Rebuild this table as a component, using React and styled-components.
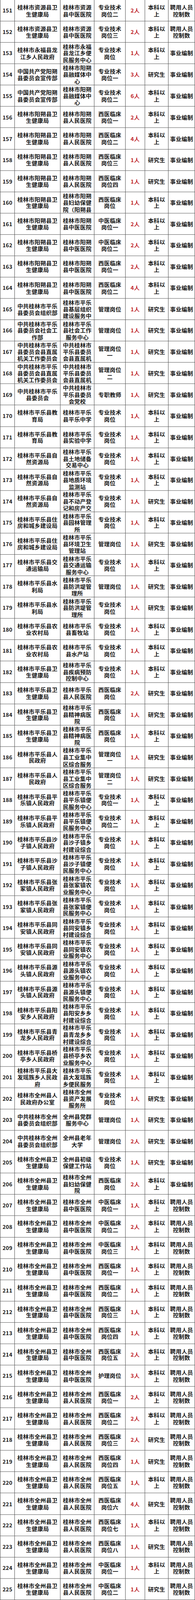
import React from 'react';
import styled, { createGlobalStyle } from 'styled-components';

const GlobalStyle = createGlobalStyle`
  html, body {
    margin: 0;
    padding: 0;
    background: #fff;
  }
  body {
    font-family: "Noto Sans CJK SC", sans-serif;
    color: #161616;
  }
`;

// the sheet is laid out at the screenshot's size, the browser window tops out at 4096px
const SHEET_H = 4431;
const VIEW_H = 4096;
const ROW_H = SHEET_H / 75;
const LINE_H = 18.6;
const LINE_COLOR = '#4a4a4a';

const Page = styled.div`
  width: 500px;
  height: ${VIEW_H}px;
  overflow: hidden;
`;

const Sheet = styled.div`
  display: grid;
  width: 500px;
  grid-template-columns: 38px 117px 87px 80px 50px 60px 68px;
  grid-auto-rows: ${ROW_H}px;
  transform: scaleY(${VIEW_H / SHEET_H});
  transform-origin: 0 0;
`;

const Row = styled.div`
  display: contents;
`;

const Cell = styled.div`
  box-sizing: border-box;
  display: flex;
  align-items: center;
  justify-content: center;
  min-width: 0;
  padding: 1px ${(p) => p.$pad}px 0;
  border-right: 1px solid ${LINE_COLOR};
  border-bottom: 1px solid ${LINE_COLOR};
  border-left: ${(p) => (p.$first ? `1px solid ${LINE_COLOR}` : '0')};
  font-size: ${(p) => (p.$num ? 14 : 14.5)}px;
  letter-spacing: ${(p) => (p.$num ? 0 : 0.25)}px;
  line-height: ${LINE_H}px;
  font-weight: 700;
  color: ${(p) => (p.$red ? '#c0272d' : '#161616')};
`;

const Text = styled.div`
  width: 100%;
  text-align: center;
  ${(p) =>
    p.$clip &&
    `
    max-height: ${LINE_H * 3}px;
    overflow: hidden;
  `}
`;

// long names only show their first three lines, like the sheet cells
const Wrapped = ({ children, perLine }) => (
  <Text $clip={children.length > perLine * 3}>{children}</Text>
);

const ZY = '桂林市资源县卫生健康局';
const YS_PROP = '中国共产党阳朔县委员会宣传部';
const YS = '桂林市阳朔县卫生健康局';
const PL_ZHISHU = '中共桂林市平乐县委员会县直属机关工作委员会';
const PL_HEALTH = '桂林市平乐县卫生健康局';
const QZ = '桂林市全州县卫生健康局';
const QZ_ZY = '桂林市全州县中医医院';
const QZ_RM = '桂林市全州县人民医院';
const BK = '本科以上';
const YJS = '研究生';
const SY = '事业编制';
const PY = '聘用人员控制数';

const rows = [
  [151, ZY, '桂林市资源县中医医院', '专业技术岗位二', '2人', BK, PY],
  [152, ZY, '桂林市资源县中医医院', '专业技术岗位三', '2人', BK, PY],
  [153, '桂林市永福县龙江乡人民政府', '桂林市永福县龙江乡便民服务中心', '专业技术岗位', '1人', BK, SY],
  [154, YS_PROP, '桂林市阳朔县融媒体中心', '专业技术岗位一', '3人', YJS, SY],
  [155, YS_PROP, '桂林市阳朔县融媒体中心', '专业技术岗位二', '6人', BK, SY],
  [156, YS, '桂林市阳朔县人民医院', '西医临床岗位一', '2人', BK, SY],
  [157, YS, '桂林市阳朔县人民医院', '西医临床岗位二', '4人', BK, SY],
  [158, YS, '桂林市阳朔县人民医院', '西医临床岗位三', '1人', YJS, SY],
  [159, YS, '桂林市阳朔县人民医院', '西医临床岗位四', '1人', YJS, SY],
  [160, YS, '桂林市阳朔县妇幼保健院（阳朔县妇幼保健计划生育服务中心）', '西医临床岗位', '1人', BK, SY],
  [161, YS, '桂林市阳朔县中医医院', '中医临床岗位一', '2人', BK, SY],
  [162, YS, '桂林市阳朔县中医医院', '中医临床岗位二', '2人', BK, SY],
  [163, YS, '桂林市阳朔县中医医院', '西医临床岗位一', '2人', BK, SY],
  [164, YS, '桂林市阳朔县中医医院', '西医临床岗位二', '4人', BK, SY],
  [165, '中共桂林市平乐县委员会组织部', '桂林市平乐县基层组织建设服务中心', '管理岗位', '1人', YJS, SY],
  [166, '中共桂林市平乐县委员会社会工作部', '桂林市平乐县社会工作服务中心', '管理岗位', '1人', YJS, SY],
  [167, PL_ZHISHU, '中共桂林市平乐县委员会县直属机关工作委员会党建服务中心', '管理岗位一', '1人', YJS, SY],
  [168, PL_ZHISHU, '中共桂林市平乐县委员会县直属机关工作委员会党建服务中心', '管理岗位二', '1人', YJS, SY],
  [169, '中共桂林市平乐县委员会', '中共桂林市平乐县委员会党校', '专职教师', '1人', YJS, SY],
  [170, '桂林市平乐县教育局', '桂林市平乐县平乐中学', '专业技术岗位', '1人', BK, SY],
  [171, '桂林市平乐县教育局', '桂林市平乐县实验中学', '专业技术岗位', '1人', BK, SY],
  [172, '桂林市平乐县自然资源局', '桂林市平乐县土地储备交易中心', '专业技术岗位', '1人', BK, SY],
  [173, '桂林市平乐县自然资源局', '桂林市平乐县地质环境监测站', '专业技术岗位', '1人', BK, SY],
  [174, '桂林市平乐县自然资源局', '桂林市平乐县不动产登记和房产交易中心', '专业技术岗位', '1人', YJS, SY],
  [175, '桂林市平乐县住房和城乡建设局', '桂林市平乐县园林管理所', '专业技术岗位', '1人', BK, SY],
  [176, '桂林市平乐县住房和城乡建设局', '桂林市平乐县环境卫生管理站', '管理岗位', '1人', YJS, SY],
  [177, '桂林市平乐县交通运输局', '桂林市平乐县交通运输服务中心', '专业技术岗位', '1人', BK, SY],
  [178, '桂林市平乐县水利局', '桂林市平乐县防洪堤管理所', '管理岗位', '1人', YJS, SY],
  [179, '桂林市平乐县水利局', '桂林市平乐县防洪堤管理所', '专业技术岗位', '1人', YJS, SY],
  [180, '桂林市平乐县农业农村局', '桂林市平乐县畜牧站', '专业技术岗位', '1人', BK, SY],
  [181, '桂林市平乐县农业农村局', '桂林市平乐县水产站', '专业技术岗位', '1人', BK, SY],
  [182, PL_HEALTH, '桂林市平乐县疾病预防控制中心', '专业技术岗位', '1人', BK, SY],
  [183, PL_HEALTH, '桂林市平乐县人民医院', '西医临床岗位', '2人', YJS, SY],
  [184, PL_HEALTH, '桂林市平乐县精神病医院', '西医临床岗位', '1人', YJS, SY],
  [185, PL_HEALTH, '桂林市平乐县精神病医院', '西医临床岗位', '1人', BK, SY],
  [186, '桂林市平乐县人民政府', '桂林市平乐县工业集中区综合服务中心', '管理岗位一', '1人', YJS, SY],
  [187, '桂林市平乐县人民政府', '桂林市平乐县工业集中区综合服务中心', '管理岗位二', '1人', YJS, SY],
  [188, '桂林市平乐县平乐镇人民政府', '桂林市平乐县平乐镇便民服务中心', '专业技术岗位一', '1人', BK, SY],
  [189, '桂林市平乐县平乐镇人民政府', '桂林市平乐县平乐镇便民服务中心', '专业技术岗位二', '1人', BK, SY],
  [190, '桂林市平乐县沙子镇人民政府', '桂林市平乐县沙子镇乡村建设综合服务中心', '专业技术岗位', '1人', BK, SY],
  [191, '桂林市平乐县沙子镇人民政府', '桂林市平乐县沙子镇便民服务中心', '专业技术岗位', '1人', BK, SY],
  [192, '桂林市平乐县张家镇人民政府', '桂林市平乐县张家镇农业服务中心', '专业技术岗位', '1人', BK, SY],
  [193, '桂林市平乐县张家镇人民政府', '桂林市平乐县张家镇便民服务中心', '专业技术岗位', '1人', BK, SY],
  [194, '桂林市平乐县同安镇人民政府', '桂林市平乐县同安镇乡村建设综合服务中心', '专业技术岗位', '1人', BK, SY],
  [195, '桂林市平乐县同安镇人民政府', '桂林市平乐县同安镇农业服务中心', '专业技术岗位', '1人', BK, SY],
  [196, '桂林市平乐县源头镇人民政府', '桂林市平乐县源头镇农业服务中心', '专业技术岗位', '1人', BK, SY],
  [197, '桂林市平乐县源头镇人民政府', '桂林市平乐县源头镇便民服务中心', '专业技术岗位', '1人', BK, SY],
  [198, '桂林市平乐县阳安乡人民政府', '桂林市平乐县阳安乡乡村建设综合服务中心', '专业技术岗位', '1人', BK, SY],
  [199, '桂林市平乐县青龙乡人民政府', '桂林市平乐县青龙乡乡村建设综合服务中心', '专业技术岗位', '1人', BK, SY],
  [200, '桂林市平乐县桥亭乡人民政府', '桂林市平乐县桥亭乡农业服务中心', '专业技术岗位', '1人', BK, SY],
  [201, '桂林市平乐县大发瑶族乡人民政府', '桂林市平乐县大发瑶族乡便民服务中心', '专业技术岗位', '1人', BK, SY],
  [202, '桂林市全州县人民政府办公室', '桂林市全州县资产发展服务所', '专业技术岗位', '1人', YJS, SY],
  [203, '中共桂林市全州县委员会组织部', '全州县党群服务中心', '管理岗位', '1人', YJS, SY],
  [204, '中共桂林市全州县委员会组织部', '全州县老年大学', '管理岗位', '2人', YJS, SY],
  [205, QZ, '全州县初级保健工作站', '专业技术岗位', '1人', YJS, SY],
  [206, QZ, '桂林市全州县妇幼保健院', '西医临床岗位', '2人', BK, SY],
  [207, QZ, QZ_ZY, '中医临床岗位一', '1人', BK, PY],
  [208, QZ, QZ_ZY, '中医临床岗位二', '2人', BK, PY],
  [209, QZ, QZ_ZY, '中医临床岗位三', '1人', BK, PY],
  [210, QZ, QZ_ZY, '西医临床岗位一', '1人', BK, PY],
  [211, QZ, QZ_ZY, '西医临床岗位二', '1人', BK, PY],
  [212, QZ, QZ_ZY, '西医临床岗位三', '1人', BK, PY],
  [213, QZ, QZ_ZY, '西医临床岗位四', '1人', BK, PY],
  [214, QZ, QZ_ZY, '西医临床岗位五', '2人', BK, PY],
  [215, QZ, QZ_ZY, '护理岗位', '3人', BK, PY],
  [216, QZ, QZ_RM, '西医临床岗位一', '2人', BK, PY],
  [217, QZ, QZ_RM, '西医临床岗位二', '2人', BK, PY],
  [218, QZ, QZ_RM, '西医临床岗位三', '2人', YJS, PY],
  [219, QZ, QZ_RM, '西医临床岗位四', '1人', YJS, PY],
  [220, QZ, QZ_RM, '西医临床岗位五', '1人', BK, PY],
  [221, QZ, QZ_RM, '西医临床岗位六', '4人', YJS, PY],
  [222, QZ, QZ_RM, '西医临床岗位七', '1人', BK, PY],
  [223, QZ, QZ_RM, '西医临床岗位八', '1人', YJS, PY],
  [224, QZ, QZ_RM, '中医临床岗位一', '1人', BK, PY],
  [225, QZ, QZ_RM, '中医临床岗位二', '1人', YJS, PY],
];

const App = () => (
  <>
    <GlobalStyle />
    <Page>
      <Sheet>
        {rows.map(([no, dept, unit, post, count, edu, kind]) => (
          <Row key={no}>
            <Cell $pad={2} $num $first>
              <Text>{no}</Text>
            </Cell>
            <Cell $pad={4}>
              <Wrapped perLine={7}>{dept}</Wrapped>
            </Cell>
            <Cell $pad={4}>
              <Wrapped perLine={5}>{unit}</Wrapped>
            </Cell>
            <Cell $pad={4}>
              <Wrapped perLine={4}>{post}</Wrapped>
            </Cell>
            <Cell $pad={2} $red>
              <Text>{count}</Text>
            </Cell>
            <Cell $pad={4}>
              <Text>{edu}</Text>
            </Cell>
            <Cell $pad={2}>
              <Text>{kind}</Text>
            </Cell>
          </Row>
        ))}
      </Sheet>
    </Page>
  </>
);

export default App;
